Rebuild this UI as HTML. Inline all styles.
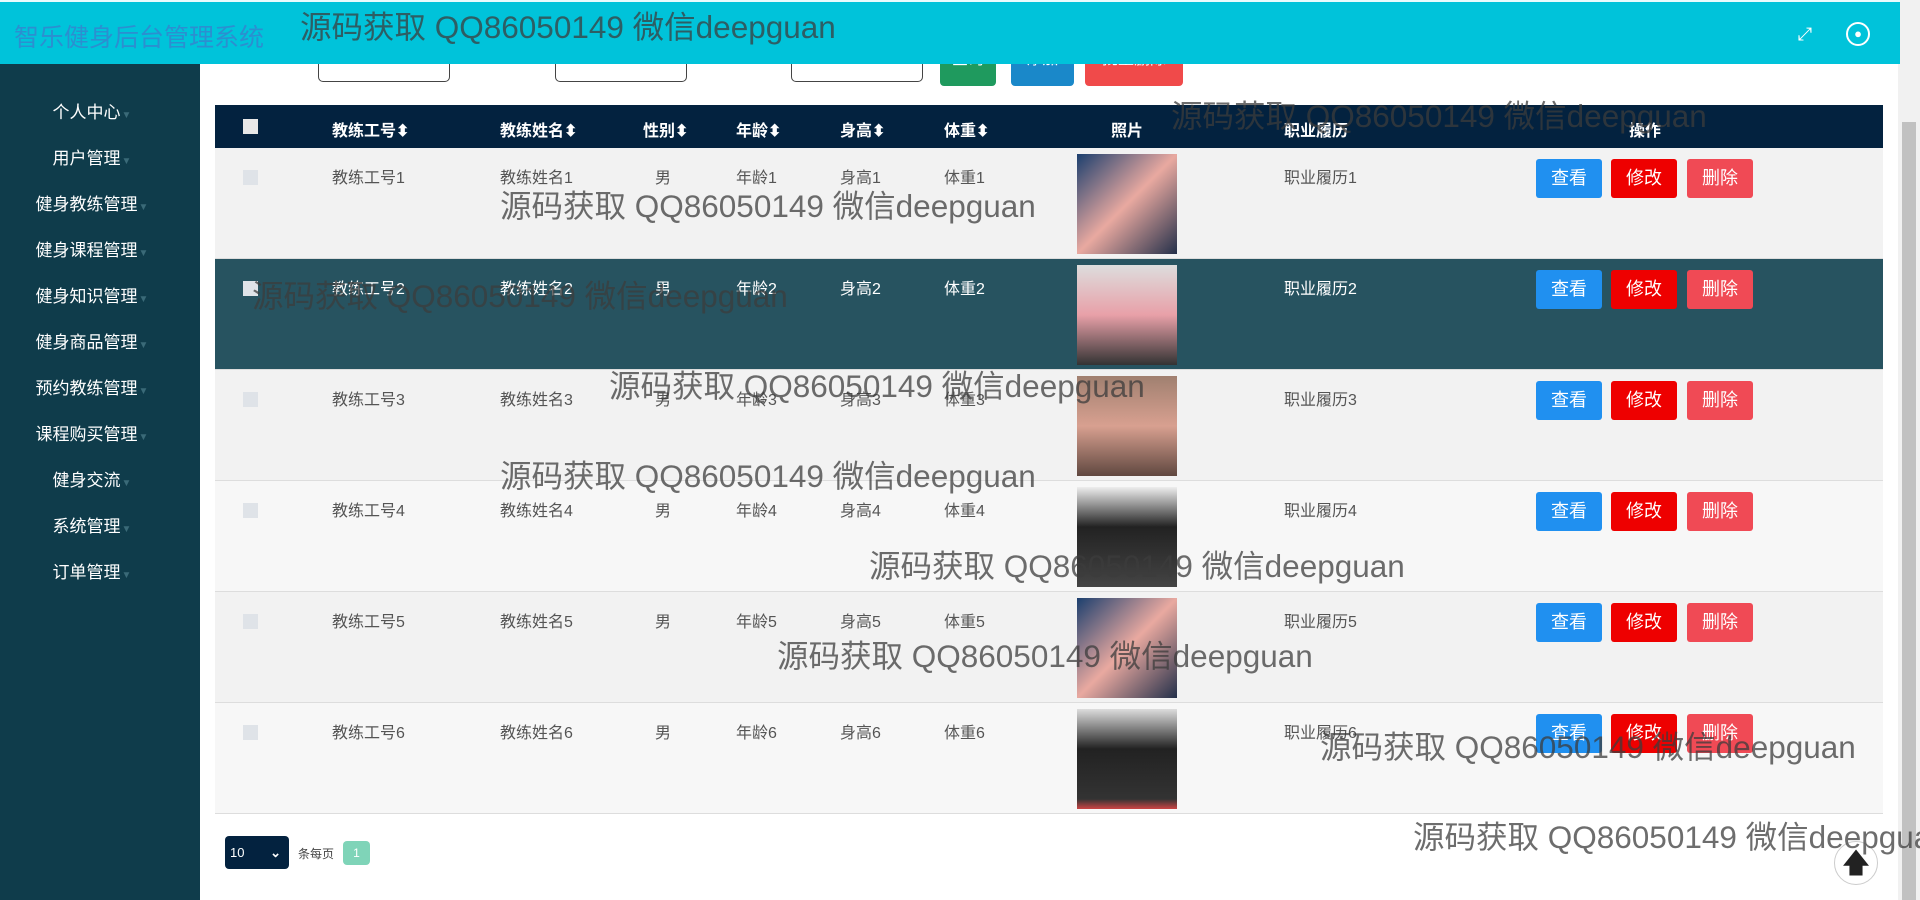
<!DOCTYPE html><html><head><meta charset="utf-8"><style>
*{margin:0;padding:0;box-sizing:border-box}
body{width:1920px;height:900px;overflow:hidden;background:#fff;font-family:"Liberation Sans","Noto Sans CJK SC",sans-serif;position:relative}
.hdr{position:absolute;left:0;top:0;width:1900px;height:64px;background:#00c3da;border-top:2px solid #e8fbfd;z-index:5}
.title{position:absolute;left:14px;top:16px;font-size:25px;color:#2b8fd0}
.ic{position:absolute;top:18px;width:28px;height:28px;color:#fff;font-size:18px;text-align:center;line-height:28px}
.side{position:absolute;left:0;top:64px;width:200px;height:836px;background:#0f3c4b}
.side div{position:absolute;width:200px;left:-8px;text-align:center;color:#fff;font-size:17px}
.side div span{color:#3a6a78;font-size:10px;margin-left:1px}
.sb{position:absolute;left:1898px;top:0;width:22px;height:900px;background:#f1f1f1}
.sb i{position:absolute;left:4px;top:122px;width:14px;height:778px;background:#c1c1c1}
.inp{position:absolute;top:50px;width:132px;height:32px;border:1px solid #444;border-radius:5px;background:#fff}
.tb{position:absolute;top:50px;height:36px;border-radius:4px;color:#fff;font-size:16px;text-align:center;line-height:20px}
.th{position:absolute;left:215px;top:105px;width:1668px;height:43px;background:#03223f;color:#fff;font-weight:bold;font-size:16px}
.th span,.row span{position:absolute;top:12px}
.row{position:absolute;left:215px;width:1668px;height:111px;background:#f2f2f2;border-bottom:1px solid #ddd;color:#555;font-size:16px}
.row span{top:16px}
.row.hl{background:#275360;color:#fff}
.cb{position:absolute;left:28px;top:22px;width:15px;height:15px;background:#dfe3e8}
.img{position:absolute;left:862px;top:6px;width:100px;height:100px}
.b{position:absolute;top:11px;width:66px;height:39px;border-radius:3px;color:#fff;font-size:18px;text-align:center;line-height:39px}
.wm{position:absolute;font-size:31.5px;color:rgba(60,60,60,.75);white-space:nowrap;z-index:6}
</style></head><body>
<div class="inp" style="left:318px"></div><div class="inp" style="left:555px"></div><div class="inp" style="left:791px"></div>
<div class="tb" style="left:940px;width:56px;background:#1f9a5e">查询</div>
<div class="tb" style="left:1011px;width:63px;background:#1a88c9">添加</div>
<div class="tb" style="left:1085px;width:98px;background:#f04a4a">批量删除</div>
<div class="hdr"><div class="title">智乐健身后台管理系统</div>
<div class="ic" style="left:1791px">⤢</div><div class="ic" style="left:1846px;border:2px solid #fff;border-radius:50%;width:24px;height:24px;top:20px;font-size:13px;line-height:20px">&#9679;</div></div>
<div class="side">
<div style="top:34px">个人中心<span>▼</span></div><div style="top:80px">用户管理<span>▼</span></div>
<div style="top:126px">健身教练管理<span>▼</span></div><div style="top:172px">健身课程管理<span>▼</span></div>
<div style="top:218px">健身知识管理<span>▼</span></div><div style="top:264px">健身商品管理<span>▼</span></div>
<div style="top:310px">预约教练管理<span>▼</span></div><div style="top:356px">课程购买管理<span>▼</span></div>
<div style="top:402px">健身交流<span>▼</span></div><div style="top:448px">系统管理<span>▼</span></div>
<div style="top:494px">订单管理<span>▼</span></div></div>
<div class="th"><i style="position:absolute;left:28px;top:14px;width:15px;height:15px;background:#e8e8e8"></i>
<span style="left:117px">教练工号⬍</span><span style="left:285px">教练姓名⬍</span><span style="left:428px">性别⬍</span><span style="left:521px">年龄⬍</span><span style="left:625px">身高⬍</span><span style="left:729px">体重⬍</span><span style="left:896px">照片</span><span style="left:1069px">职业履历</span><span style="left:1414px">操作</span></div>
<div id="rows"></div>
<div style="position:absolute;left:225px;top:836px;width:64px;height:33px;background:#03223f;border-radius:4px;color:#fff;font-size:13px;line-height:33px;padding-left:5px">10<span style="position:absolute;right:8px;font-weight:bold">⌄</span></div>
<div style="position:absolute;left:298px;top:845px;font-size:12px;color:#444">条每页</div>
<div style="position:absolute;left:343px;top:841px;width:27px;height:24px;background:#7fd4b8;border-radius:4px;color:#fff;font-size:12px;text-align:center;line-height:24px">1</div>
<div style="position:absolute;left:1834px;top:841px;width:44px;height:44px;border-radius:50%;background:#fff;border:1px solid #ccc;text-align:center;font-size:28px;line-height:42px;color:#222">🡅</div>
<div class="sb"><i></i></div>
<div class="wm" style="left:300px;top:2px">源码获取 QQ86050149 微信deepguan</div>
<div class="wm" style="left:1171px;top:91px">源码获取 QQ86050149 微信deepguan</div>
<div class="wm" style="left:500px;top:181px">源码获取 QQ86050149 微信deepguan</div>
<div class="wm" style="left:252px;top:271px">源码获取 QQ86050149 微信deepguan</div>
<div class="wm" style="left:609px;top:361px">源码获取 QQ86050149 微信deepguan</div>
<div class="wm" style="left:500px;top:451px">源码获取 QQ86050149 微信deepguan</div>
<div class="wm" style="left:869px;top:541px">源码获取 QQ86050149 微信deepguan</div>
<div class="wm" style="left:777px;top:631px">源码获取 QQ86050149 微信deepguan</div>
<div class="wm" style="left:1320px;top:722px">源码获取 QQ86050149 微信deepguan</div>
<div class="wm" style="left:1413px;top:812px">源码获取 QQ86050149 微信deepguan</div>
<script>
var imgs=["linear-gradient(135deg,#1c3f6e,#e9a9a0 50%,#24304a)","linear-gradient(180deg,#ddd,#e8a0a8 50%,#333)","linear-gradient(180deg,#a08070,#d8a090 50%,#604840)","linear-gradient(180deg,#eee,#222 40%,#444)","linear-gradient(135deg,#1c3f6e,#e9a9a0 50%,#24304a)","linear-gradient(180deg,#ddd,#222 40%,#333 90%,#c44)"];
var h="";for(var i=0;i<6;i++){var n=i+1;h+='<div class="row'+(i==1?' hl':'')+'" style="top:'+(148+i*111)+'px;background:'+(i==1?'#275360':(i%2?'#f7f7f7':'#f2f2f2'))+'"><i class="cb"></i><span style="left:117px">教练工号'+n+'</span><span style="left:285px">教练姓名'+n+'</span><span style="left:440px">男</span><span style="left:521px">年龄'+n+'</span><span style="left:625px">身高'+n+'</span><span style="left:729px">体重'+n+'</span><div class="img" style="background:'+imgs[i]+'"></div><span style="left:1069px">职业履历'+n+'</span><div class="b" style="left:1321px;background:#2090f0">查看</div><div class="b" style="left:1396px;background:#ee0000">修改</div><div class="b" style="left:1472px;background:#f04a55">删除</div></div>';}
document.getElementById("rows").innerHTML=h;
</script></body></html>
